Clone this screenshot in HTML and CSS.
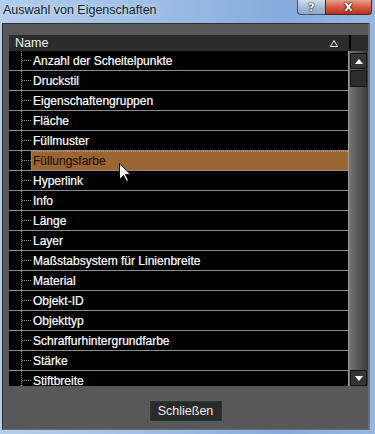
FILE: index.html
```html
<!DOCTYPE html>
<html lang="de">
<head>
  <meta charset="UTF-8" />
  <title>Auswahl von Eigenschaften</title>
  <link rel="stylesheet" href="styles.css">
</head>
<body>

  <div class="window">
    <div class="titlebar">
      <span class="title">Auswahl von Eigenschaften</span>
      <div class="caption-buttons">
        <span class="cap-btn help">?</span>
        <span class="cap-btn close">X</span>
      </div>
    </div>

    <div class="dialog">
      <div class="list">
        <div class="list-header">
          <div class="col-name">
            <span>Name</span>
            <svg class="sort" width="8" height="7" viewBox="0 0 8 7">
              <path d="M4 0.5 L7.5 6.5 L0.5 6.5 Z" fill="none" stroke="#f0f0f0" stroke-width="1" />
            </svg>
          </div>
          <div class="col-divider"></div>
          <div class="col-rest"></div>
        </div>

        <div class="list-body">
          <div class="rows">
            <div class="row"><span class="tree"></span><span class="label">Anzahl der Scheitelpunkte</span></div>
            <div class="row"><span class="tree"></span><span class="label">Druckstil</span></div>
            <div class="row"><span class="tree"></span><span class="label">Eigenschaftengruppen</span></div>
            <div class="row"><span class="tree"></span><span class="label">Fläche</span></div>
            <div class="row"><span class="tree"></span><span class="label">Füllmuster</span></div>
            <div class="row selected"><span class="tree"></span><span class="label">Füllungsfarbe</span></div>
            <div class="row"><span class="tree"></span><span class="label">Hyperlink</span></div>
            <div class="row"><span class="tree"></span><span class="label">Info</span></div>
            <div class="row"><span class="tree"></span><span class="label">Länge</span></div>
            <div class="row"><span class="tree"></span><span class="label">Layer</span></div>
            <div class="row"><span class="tree"></span><span class="label">Maßstabsystem für Linienbreite</span></div>
            <div class="row"><span class="tree"></span><span class="label">Material</span></div>
            <div class="row"><span class="tree"></span><span class="label">Objekt-ID</span></div>
            <div class="row"><span class="tree"></span><span class="label">Objekttyp</span></div>
            <div class="row"><span class="tree"></span><span class="label">Schraffurhintergrundfarbe</span></div>
            <div class="row"><span class="tree"></span><span class="label">Stärke</span></div>
            <div class="row"><span class="tree"></span><span class="label">Stiftbreite</span></div>
          </div>

          <div class="scrollbar">
            <div class="sb-btn">
              <svg width="8" height="5" viewBox="0 0 8 5"><path d="M4 0 L8 5 L0 5 Z" fill="#fff" /></svg>
            </div>
            <div class="sb-thumb"></div>
            <div class="sb-track"></div>
            <div class="sb-btn">
              <svg width="8" height="5" viewBox="0 0 8 5"><path d="M0 0 L8 0 L4 5 Z" fill="#fff" /></svg>
            </div>
          </div>
        </div>
      </div>

      <div class="footer">
        <button class="btn">Schließen</button>
      </div>
    </div>

    <!-- mouse pointer over the selected row -->
    <svg class="cursor" width="13" height="20" viewBox="0 0 13 20">
      <path d="M0.5 0.5 L0.5 16.5 L4.5 12.5 L7.5 18.5 L9.5 17.5 L6.5 11.5 L11.5 11.5 Z" fill="#fff" stroke="#000" stroke-width="1" />
    </svg>
  </div>

</body>
</html>
```

FILE: styles.css
```css
* {
  margin: 0;
  padding: 0;
  box-sizing: border-box;
}

body {
  font-family: 'Liberation Sans', Arial, sans-serif;
  font-size: 12px;
  background-color: #93b4dc;
  overflow: hidden;
}

.window {
  position: relative;
  width: 375px;
  height: 434px;
  background: linear-gradient(to right, #b3cdec 0%, #9dbfe6 40%, #86abdc 75%, #94b8e2 100%);
}

/* title bar */

.titlebar {
  height: 23px;
  display: flex;
  justify-content: space-between;
  align-items: flex-start;
  padding-right: 3px;
}

.title {
  padding: 3px 0 0 3px;
  font-size: 12.5px;
  color: #141e2a;
  text-shadow: 0 0 6px rgba(255, 255, 255, 0.7);
}

.caption-buttons {
  display: flex;
}

.cap-btn {
  height: 15px;
  display: flex;
  align-items: center;
  justify-content: center;
  font-family: 'DejaVu Sans', sans-serif;
  font-weight: bold;
  font-size: 11px;
  color: #fff;
  text-shadow: 0 0 1px #000, 0 0 2px #000;
  border: 1px solid #3b4d66;
  border-top: none;
}

.cap-btn.help {
  width: 28px;
  border-right: none;
  border-bottom-left-radius: 4px;
  background: linear-gradient(to bottom, #d2dded, #a7bad3 50%, #93a9c6);
}

.cap-btn.close {
  width: 47px;
  border-color: #5b2118;
  border-bottom-right-radius: 4px;
  background: linear-gradient(to bottom, #e8a08e, #d25b45 50%, #b8321f);
}

/* dialog body */

.dialog {
  height: 407px;
  margin: 0 5px 0 2px;
  background-color: #585858;
  border-left: 1px solid #2f2f2f;
  border-top: 1px solid #2f2f2f;
  border-right: 2px solid #6e6e6e;
  border-bottom: 1px solid #6e6e6e;
  padding: 11px 0 0 6px;
}

.list {
  height: 351px;
  display: flex;
  flex-direction: column;
  background-color: #000;
}

.list-header {
  height: 16px;
  display: flex;
  background-color: #2c2c2c;
  color: #f2f2f2;
  font-size: 12.5px;
}

.col-name {
  width: 340px;
  display: flex;
  align-items: center;
  justify-content: space-between;
  padding: 0 11px 0 6px;
}

.col-divider {
  width: 2px;
  background-color: #000;
}

.col-rest {
  flex: 1;
}

.list-body {
  flex: 1;
  display: flex;
  overflow: hidden;
}

.rows {
  width: 340px;
  overflow: hidden;
  border-right: 1px solid #9a9a9a;
}

.row {
  height: 20px;
  display: flex;
  border-bottom: 1px solid #8c8c8c;
  color: #fff;
}

.tree {
  width: 10px;
  margin-left: 12px;
  border-left: 1px dotted #9a9a9a;
  display: flex;
  align-items: center;
}

.tree::after {
  content: '';
  width: 9px;
  border-top: 1px dotted #9a9a9a;
}

.label {
  flex: 1;
  display: flex;
  align-items: center;
  padding-left: 2px;
  -webkit-text-stroke: 0.2px #fff;
}

.row.selected .label {
  background-color: #9b6532;
  color: #23160a;
  -webkit-text-stroke: 0.2px #23160a;
  border-top: 1px dotted #35c8c0;
  border-left: 1px dotted #35c8c0;
  padding-left: 1px;
}

/* scrollbar */

.scrollbar {
  width: 19px;
  display: flex;
  flex-direction: column;
  padding: 2px 1px 0 1px;
  background: linear-gradient(to right, #757575, #3a3a3a);
}

.sb-btn {
  height: 16px;
  display: flex;
  align-items: center;
  justify-content: center;
  background-color: #363636;
  border: 1px solid #111;
}

.sb-thumb {
  height: 17px;
  margin-top: 1px;
  background-color: #2d2d2d;
  border: 1px solid #151515;
}

.sb-track {
  flex: 1;
}

/* footer */

.footer {
  display: flex;
  justify-content: center;
  padding: 14px 6px 0 0;
}

.btn {
  width: 74px;
  height: 22px;
  font-family: 'Liberation Sans', Arial, sans-serif;
  font-size: 12.5px;
  color: #ececec;
  background-color: #2a2a2a;
  border: 1px solid #4e5f5e;
  box-shadow: inset 0 0 0 1px #333;
}

.cursor {
  position: absolute;
  left: 119px;
  top: 163px;
}
```
